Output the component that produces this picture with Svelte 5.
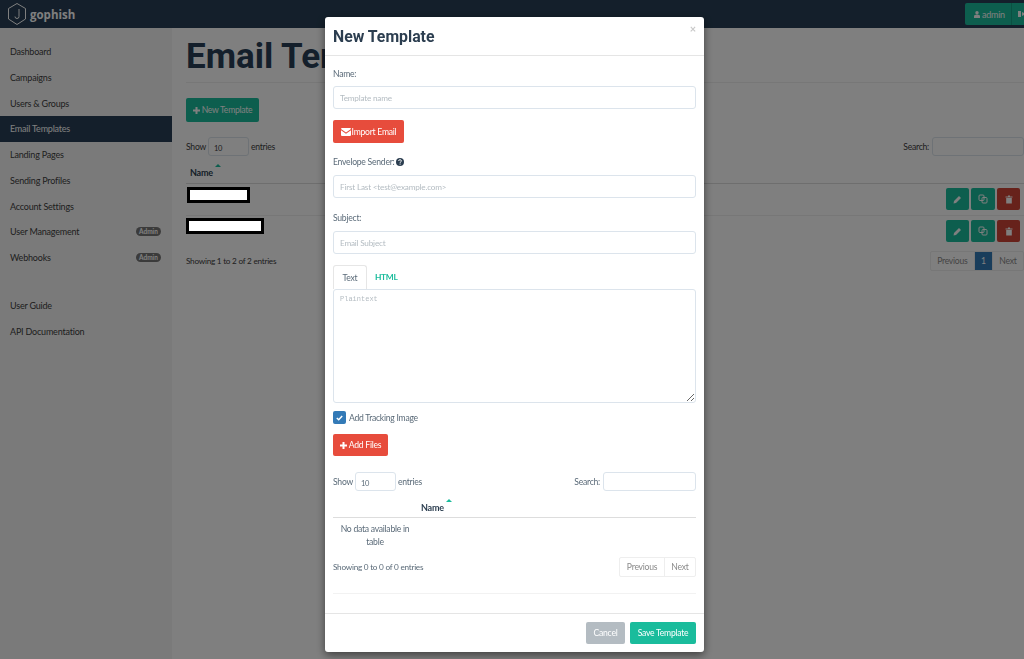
<script>
  const nav = [
    { label: 'Dashboard' }, { label: 'Campaigns' }, { label: 'Users & Groups' },
    { label: 'Email Templates', active: true }, { label: 'Landing Pages' },
    { label: 'Sending Profiles' }, { label: 'Account Settings' },
    { label: 'User Management', badge: true }, { label: 'Webhooks', badge: true }
  ];
  const rows = [{ w: 63, top: 3, ml: 1 }, { w: 78, top: 2, ml: 0 }];
</script>

<div class="page">
  <header class="topbar">
    <div class="brand">
      <svg width="20" height="24" viewBox="0 0 20 24" fill="none" stroke="#fff" stroke-width="1">
        <path d="M10 1.5 18.5 6.5V17L10 22.5 1.5 17V6.5Z" />
        <path d="M12 7V14.5Q12 16.5 10 16.5T8 14.5" />
      </svg>
      <span>gophish</span>
    </div>
    <div class="usermenu">
      <span class="uname">
        <svg width="6" height="7" viewBox="0 0 7 8"><circle cx="3.5" cy="2" r="2" fill="#fff"/><path d="M0 8V6Q0 4 3.5 4T7 6V8Z" fill="#fff"/></svg>
        admin
      </span>
      <span class="logout">
        <svg width="8" height="8" viewBox="0 0 8 8"><path d="M0 1H3V7H0ZM4 2 8 4 4 6Z" fill="#fff"/></svg>
      </span>
    </div>
  </header>

  <div class="body">
    <aside class="sidebar">
      <ul>
        {#each nav as item}
          <li class:active={item.active}>
            <span>{item.label}</span>
            {#if item.badge}<b class="badge">Admin</b>{/if}
          </li>
        {/each}
      </ul>
      <ul class="secondary">
        <li><span>User Guide</span></li>
        <li><span>API Documentation</span></li>
      </ul>
    </aside>

    <main class="main">
      <h1>Email Templates</h1>
      <hr />
      <button class="btn teal newbtn">
        <svg width="7" height="7" viewBox="0 0 7 7"><path d="M2.5 0H4.5V2.5H7V4.5H4.5V7H2.5V4.5H0V2.5H2.5Z" fill="#fff"/></svg>
        New Template
      </button>
      <div class="tools">
        <div class="show">Show <span class="fake select">10</span> entries</div>
        <div class="search">Search: <span class="fake searchbox"></span></div>
      </div>
      <div class="thead"><span class="namehead">Name<i class="caret"></i></span></div>
      {#each rows as r, i}
        <div class="trow" class:last={i === 1}>
          <div class="redact" style="width:{r.w}px;margin-top:{r.top}px;margin-left:{r.ml}px"></div>
          <div class="actions">
            <span class="act teal">
              <svg width="9" height="9" viewBox="0 0 9 9"><path d="M0.5 8.5 1 6 6 1 8 3 3 8Z" fill="#fff"/></svg>
            </span>
            <span class="act teal wide">
              <svg width="10" height="10" viewBox="0 0 10 10" fill="none" stroke="#fff" stroke-width="1"><rect x="1" y="1" width="5" height="5.5" rx="1"/><rect x="4" y="3.5" width="5" height="5.5" rx="1"/></svg>
            </span>
            <span class="act red">
              <svg width="8" height="9" viewBox="0 0 8 9"><path d="M0.5 1.5H7.5V2.5H0.5ZM3 .5H5V1.5H3ZM1.2 3H6.8V8.5H1.2Z" fill="#fff"/></svg>
            </span>
          </div>
        </div>
      {/each}
      <div class="tfoot">
        <span class="info">Showing 1 to 2 of 2 entries</span>
        <div class="pager dim">
          <span>Previous</span><span class="current">1</span><span>Next</span>
        </div>
      </div>
    </main>
  </div>
</div>

<div class="backdrop"></div>

<div class="modal">
  <div class="mhead">
    <h2>New Template</h2>
    <span class="close">×</span>
  </div>
  <div class="mbody">
    <label class="lbl first" for="tname">Name:</label>
    <input id="tname" class="input" placeholder="Template name" />
    <button class="btn red-btn import">
      <svg width="10" height="8" viewBox="0 0 10 8"><path d="M0 1Q0 0 1 0H9Q10 0 10 1L5 4.5ZM0 2.3 5 5.8 10 2.3V7Q10 8 9 8H1Q0 8 0 7Z" fill="#fff"/></svg>
      Import Email
    </button>
    <div class="lbl env">Envelope Sender:
      <svg class="help" width="8" height="8" viewBox="0 0 8 8"><circle cx="4" cy="4" r="4" fill="#2c3e50"/><path d="M2.6 3Q2.7 1.7 4 1.7T5.4 2.9Q5.4 3.6 4.6 4T4.3 5" fill="none" stroke="#fff" stroke-width=".9"/><rect x="3.6" y="5.6" width="1" height="1" fill="#fff"/></svg>
    </div>
    <input class="input" placeholder="First Last <test@example.com>" />
    <div class="lbl subj">Subject:</div>
    <input class="input" placeholder="Email Subject" />
    <div class="tabs">
      <span class="tab on">Text</span>
      <span class="tab link">HTML</span>
    </div>
    <textarea class="area" placeholder="Plaintext"></textarea>
    <div class="check">
      <span class="box">
        <svg width="7" height="6" viewBox="0 0 7 6"><path d="M.8 3 2.7 4.8 6.2 1" fill="none" stroke="#fff" stroke-width="1.5"/></svg>
      </span>
      Add Tracking Image
    </div>
    <button class="btn red-btn addfiles">
      <svg width="7" height="7" viewBox="0 0 7 7"><path d="M2.5 0H4.5V2.5H7V4.5H4.5V7H2.5V4.5H0V2.5H2.5Z" fill="#fff"/></svg>
      Add Files
    </button>
    <div class="tools mtools">
      <div class="show">Show <span class="fake select light">10</span> entries</div>
      <div class="search">Search: <span class="fake searchbox light wide2"></span></div>
    </div>
    <div class="mthead"><span class="mname">Name<i class="caret mint"></i></span></div>
    <div class="nodata">No data available in table</div>
    <div class="tfoot mfoot">
      <span class="info">Showing 0 to 0 of 0 entries</span>
      <div class="pager">
        <span>Previous</span><span>Next</span>
      </div>
    </div>
    <hr class="mhr" />
  </div>
  <div class="mfooter">
    <button class="btn cancel">Cancel</button>
    <button class="btn save">Save Template</button>
  </div>
</div>

<style>
  :global(body) {
    margin: 0;
    overflow: hidden;
    font-family: "Lato", "Noto Sans", sans-serif;
    font-size: 8.6px;
    letter-spacing: -0.25px;
    color: #404040;
    background: #fff;
  }
  .page { height: 659px; width: 1024px; overflow: hidden; display: flex; flex-direction: column; }

  .topbar {
    height: 28px;
    box-sizing: border-box;
    background: #283f56;
    display: flex;
    align-items: center;
    justify-content: space-between;
    padding-left: 7px;
    flex: none;
  }
  .brand { display: flex; align-items: center; gap: 3px; color: #fff; font: 700 11.5px "Open Sans", sans-serif; letter-spacing: 0; }
  .usermenu { display: flex; height: 22px; margin-right: -12px; border-radius: 2px; overflow: hidden; background: #1abc9c; color: #fff; align-items: stretch; flex: none; }
  .uname { box-sizing: border-box; width: 47px; display: flex; align-items: center; gap: 2px; padding-left: 9px; border-right: 1px solid #16a085; font-size: 9px; }
  .logout { box-sizing: border-box; width: 24px; display: flex; align-items: center; padding-left: 6px; }

  .body { flex: 1; display: flex; min-height: 0; }
  .sidebar { width: 172px; flex: none; background: #f5f5f5; padding-top: 10.75px; box-sizing: border-box; }
  ul { list-style: none; margin: 0; padding: 0; }
  li {
    height: 25.75px;
    box-sizing: border-box;
    display: flex;
    align-items: center;
    justify-content: space-between;
    padding: 0 11px 0 10px;
    color: #404040;
    font-size: 9px;
    letter-spacing: -0.2px;
  }
  li.active { background: #283f56; color: #fff; }
  .secondary { margin-top: 22px; }
  .badge {
    box-sizing: border-box;
    width: 25px;
    text-align: center;
    background: #777;
    color: #fff;
    font-size: 6.5px;
    font-weight: 700;
    border-radius: 5px;
    padding: 1px 0;
    line-height: 7px;
    letter-spacing: 0;
  }

  .main { flex: 1; min-width: 0; padding-left: 14px; box-sizing: border-box; background: #fff; }
  h1 {
    margin: 8px 0 0;
    font: 700 35px/42px Roboto, sans-serif;
    letter-spacing: 0;
    color: #283f56;
    white-space: nowrap;
  }
  hr { border: 0; border-top: 1px solid #eee; margin: 4px 0 0; }
  .btn {
    border: 0;
    border-radius: 2px;
    font-family: inherit;
    font-size: 8.6px;
    letter-spacing: inherit;
    display: flex;
    align-items: center;
    justify-content: center;
    gap: 2px;
    padding: 0;
    color: #fff;
  }
  .teal { background: #1abc9c; }
  .newbtn { width: 73px; height: 24px; margin-top: 15px; }
  .tools { display: flex; justify-content: space-between; align-items: center; margin-top: 15px; height: 19px; }
  .show, .search { display: flex; align-items: center; gap: 2px; white-space: nowrap; }
  .search { gap: 3px; }
  .fake { box-sizing: border-box; display: block; border: 1px solid #dce4ec; border-radius: 3px; background: #fff; height: 19px; }
  .select { width: 41px; padding: 6px 0 0 5px; font-size: 7.5px; line-height: 10px; }
  .searchbox { width: 92px; }
  .thead { height: 28px; border-bottom: 1px solid #ddd; position: relative; box-sizing: border-box; }
  .namehead { position: absolute; left: 4px; top: 11px; font-size: 9px; font-weight: 700; color: #2c3e50; }
  .caret {
    position: absolute;
    right: -8px;
    top: -3px;
    width: 0; height: 0;
    border-left: 3px solid transparent;
    border-right: 3px solid transparent;
    border-bottom: 3px solid #1abc9c;
  }
  .trow {
    height: 32px;
    box-sizing: border-box;
    border-bottom: 1px solid #eee;
    display: flex;
    align-items: flex-start;
    justify-content: space-between;
  }
  .trow.last { border-bottom: 0; height: 31px; }
  .redact { box-sizing: border-box; height: 16px; border: 3px solid #000; background: #fff; position: relative; z-index: 2; }
  .actions { display: flex; gap: 2px; margin: 4px 4px 0 0; }
  .act { height: 22px; width: 23px; border-radius: 2px; display: flex; align-items: center; justify-content: center; }
  .act.wide { width: 24px; }
  .act.red { background: #cf4436; }
  .tfoot { display: flex; justify-content: space-between; align-items: center; margin-top: 4px; height: 20px; }
  .info { font-size: 8.2px; }
  .pager { display: flex; border: 1px solid #eee; border-radius: 2px; height: 20px; box-sizing: border-box; color: #8a8a8a; background: #fff; }
  .pager span { display: flex; align-items: center; padding: 0 6.5px; border-left: 1px solid #eee; }
  .pager span:first-child { border-left: 0; }
  .pager .current { background: #337ab7; color: #fff; padding: 0 6px; }

  .backdrop { position: fixed; inset: 0; background: rgba(0,0,0,.5); }

  .modal {
    position: fixed;
    z-index: 3;
    left: 325px;
    top: 17px;
    width: 379px;
    height: 635px;
    background: #fff;
    border-radius: 3px;
    box-shadow: 0 3px 9px rgba(0,0,0,.5);
    display: flex;
    flex-direction: column;
    color: #5a6a78;
  }
  .mhead { height: 38px; flex: none; border-bottom: 1px solid #e5e5e5; padding: 0 8px; display: flex; justify-content: space-between; }
  h2 { margin: 0; font: 700 15.8px/39px Roboto, sans-serif; letter-spacing: 0; color: #2c3e50; }
  .close { color: #c8c8c8; font-size: 11px; font-weight: 700; line-height: 12px; margin-top: 6px; }
  .mbody { flex: 1; padding: 0 8px; display: flex; flex-direction: column; align-items: stretch; }
  .lbl { height: 12px; line-height: 12px; margin-bottom: 7px; display: flex; gap: 2px; align-items: center; color: #5a6a78; }
  .lbl.first { margin-top: 12px; margin-bottom: 6px; }
  .lbl.env { margin-top: 13px; }
  .lbl.subj { margin-top: 14px; }
  .input {
    box-sizing: border-box;
    height: 23px;
    border: 1px solid #dce4ec;
    border-radius: 3px;
    padding: 0 6px;
    font-family: inherit;
    font-size: 8.2px;
    letter-spacing: -0.2px;
    outline: none;
    flex: none;
  }
  .input::placeholder { color: #b4bcc2; opacity: 1; }
  .red-btn { background: #e74c3c; }
  .import { width: 71px; height: 23px; margin-top: 11px; gap: 1px; }
  .tabs { display: flex; margin-top: 11px; height: 24px; flex: none; }
  .tab { box-sizing: border-box; height: 24px; display: flex; align-items: center; padding: 0 9px; }
  .tab.on { border: 1px solid #e6e6e6; border-bottom: 0; border-radius: 3px 3px 0 0; color: #5a6a78; padding: 0 8.5px; }
  .tab.link { color: #1abc9c; font-weight: 700; font-size: 8.4px; padding: 0 8px; }
  .area {
    box-sizing: border-box;
    height: 114px;
    flex: none;
    border: 1px solid #dce4ec;
    border-radius: 3px;
    padding: 5px 6px;
    font: 7px "Liberation Mono", monospace;
    letter-spacing: 0;
    outline: none;
    margin: 0;
  }
  .area::placeholder { color: #b4bcc2; opacity: 1; }
  .check { display: flex; align-items: center; gap: 3px; margin-top: 8px; height: 13px; color: #5a6a78; }
  .box { width: 13px; height: 13px; background: #337ab7; border-radius: 2px; display: flex; align-items: center; justify-content: center; flex: none; }
  .addfiles { width: 55px; height: 22px; margin-top: 10px; }
  .mtools { margin-top: 16px; flex: none; }
  .wide2 { width: 93px; }
  .mthead { height: 27px; box-sizing: border-box; border-bottom: 1px solid #ddd; position: relative; flex: none; }
  .mname { position: absolute; left: 88px; top: 11px; font-size: 9px; font-weight: 700; color: #2c3e50; }
  .nodata { width: 84px; text-align: center; line-height: 13px; margin-top: 5px; color: #5a6a78; }
  .mfoot { margin-top: 8px; flex: none; }
  .mhr { margin: 16px 0 0; border-top: 1px solid #f2f2f2; }
  .mfooter { height: 39px; flex: none; border-top: 1px solid #e5e5e5; display: flex; justify-content: flex-end; gap: 5px; padding: 8px 8px 0; box-sizing: border-box; }
  .cancel { width: 39px; height: 22px; background: #b4bcc2; }
  .save { width: 66px; height: 22px; background: #1abc9c; }
  .help { flex: none; }
</style>
